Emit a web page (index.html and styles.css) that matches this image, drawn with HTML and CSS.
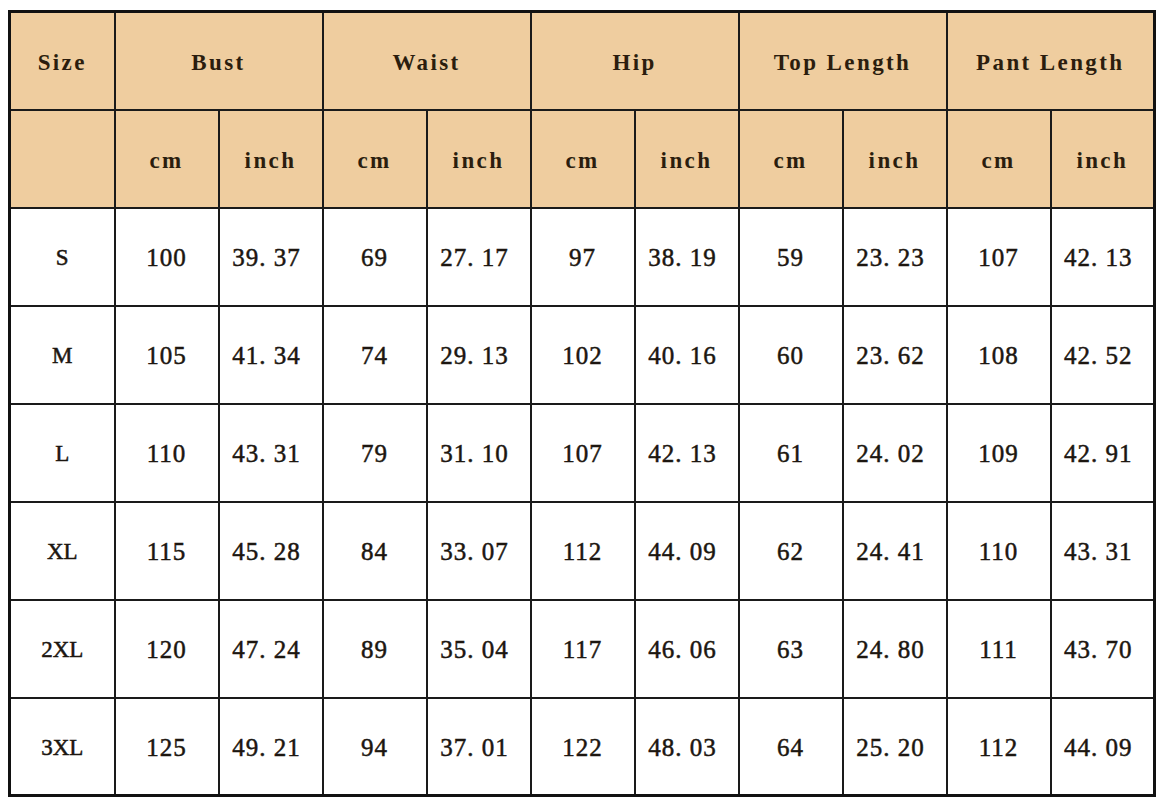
FILE: index.html
```html
<!DOCTYPE html>
<html>
<head>
<meta charset="utf-8">
<link rel="stylesheet" href="styles.css">
</head>
<body>
<table class="chart">
  <colgroup>
    <col class="c-size">
    <col><col><col><col><col><col><col><col><col><col>
  </colgroup>
  <thead>
    <tr class="head">
      <th>Size</th>
      <th colspan="2">Bust</th>
      <th colspan="2">Waist</th>
      <th colspan="2">Hip</th>
      <th colspan="2">Top Length</th>
      <th colspan="2">Pant Length</th>
    </tr>
    <tr class="head">
      <th></th>
      <th>cm</th><th>inch</th>
      <th>cm</th><th>inch</th>
      <th>cm</th><th>inch</th>
      <th>cm</th><th>inch</th>
      <th>cm</th><th>inch</th>
    </tr>
  </thead>
  <tbody>
    <tr><td class="sz">S</td><td>100</td><td class="in">39.&nbsp;37</td><td>69</td><td class="in">27.&nbsp;17</td><td>97</td><td class="in">38.&nbsp;19</td><td>59</td><td class="in">23.&nbsp;23</td><td>107</td><td class="in">42.&nbsp;13</td></tr>
    <tr><td class="sz">M</td><td>105</td><td class="in">41.&nbsp;34</td><td>74</td><td class="in">29.&nbsp;13</td><td>102</td><td class="in">40.&nbsp;16</td><td>60</td><td class="in">23.&nbsp;62</td><td>108</td><td class="in">42.&nbsp;52</td></tr>
    <tr><td class="sz">L</td><td>110</td><td class="in">43.&nbsp;31</td><td>79</td><td class="in">31.&nbsp;10</td><td>107</td><td class="in">42.&nbsp;13</td><td>61</td><td class="in">24.&nbsp;02</td><td>109</td><td class="in">42.&nbsp;91</td></tr>
    <tr><td class="sz">XL</td><td>115</td><td class="in">45.&nbsp;28</td><td>84</td><td class="in">33.&nbsp;07</td><td>112</td><td class="in">44.&nbsp;09</td><td>62</td><td class="in">24.&nbsp;41</td><td>110</td><td class="in">43.&nbsp;31</td></tr>
    <tr><td class="sz">2XL</td><td>120</td><td class="in">47.&nbsp;24</td><td>89</td><td class="in">35.&nbsp;04</td><td>117</td><td class="in">46.&nbsp;06</td><td>63</td><td class="in">24.&nbsp;80</td><td>111</td><td class="in">43.&nbsp;70</td></tr>
    <tr><td class="sz">3XL</td><td>125</td><td class="in">49.&nbsp;21</td><td>94</td><td class="in">37.&nbsp;01</td><td>122</td><td class="in">48.&nbsp;03</td><td>64</td><td class="in">25.&nbsp;20</td><td>112</td><td class="in">44.&nbsp;09</td></tr>
  </tbody>
</table>
</body>
</html>
```
FILE: styles.css
```css
html, body {
  margin: 0;
  padding: 0;
  background: #ffffff;
}
body {
  padding: 10px 0 0 8px;
}
.chart {
  border-collapse: collapse;
  table-layout: fixed;
  width: 1147px;
  border: 3px solid #111111;
  font-family: "Liberation Serif", "Times New Roman", serif;
  color: #1c1610;
}
.chart col {
  width: 104px;
}
.chart col.c-size {
  width: 105px;
}
.chart th,
.chart td {
  box-sizing: border-box;
  border: 2px solid #1a1a1a;
  height: 98px;
  padding: 0;
  text-align: center;
  vertical-align: middle;
}
.chart th {
  background: #efcd9f;
  font-weight: bold;
  font-size: 23px;
  letter-spacing: 2.4px;
  color: #2b1d0e;
  padding-top: 5px;
}
.chart td {
  font-weight: normal;
  font-size: 25px;
  letter-spacing: 1px;
  -webkit-text-stroke: 0.5px #1c1610;
  padding-top: 3px;
}
.chart td.in {
  padding-right: 8px;
}
.chart td.sz {
  font-size: 23px;
  letter-spacing: 0;
}
```
